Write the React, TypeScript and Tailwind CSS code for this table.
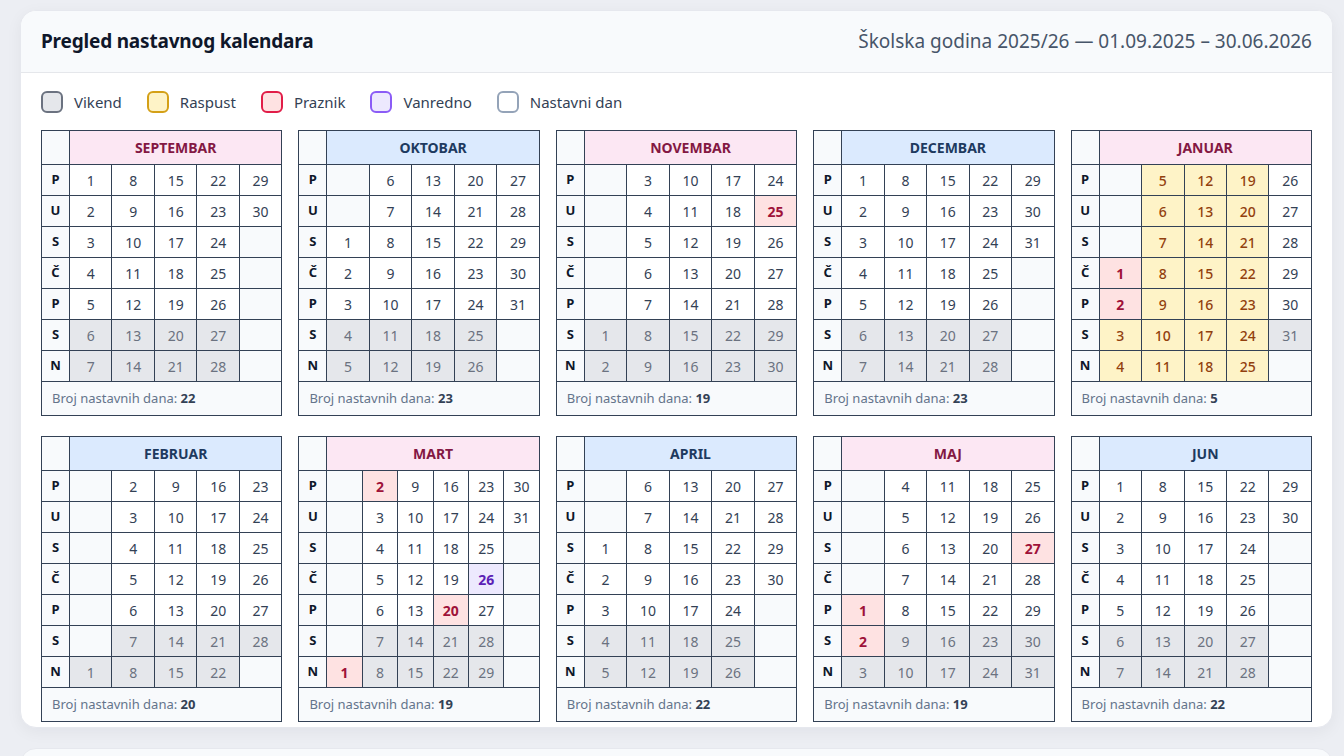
import React from "react";

type DayKind = "nastavni" | "vikend" | "raspust" | "praznik" | "vanredno";

const MONTHS = [
  { name: "Septembar", year: 2025, month: 8, count: 22 },
  { name: "Oktobar", year: 2025, month: 9, count: 23 },
  { name: "Novembar", year: 2025, month: 10, count: 19 },
  { name: "Decembar", year: 2025, month: 11, count: 23 },
  { name: "Januar", year: 2026, month: 0, count: 5 },
  { name: "Februar", year: 2026, month: 1, count: 20 },
  { name: "Mart", year: 2026, month: 2, count: 19 },
  { name: "April", year: 2026, month: 3, count: 22 },
  { name: "Maj", year: 2026, month: 4, count: 19 },
  { name: "Jun", year: 2026, month: 5, count: 22 },
];

const DAY_LABELS = ["P", "U", "S", "Č", "P", "S", "N"];

// month index (0-based) -> day list
const PRAZNICI: Record<number, number[]> = { 10: [25], 0: [1, 2], 2: [1, 2, 20], 4: [1, 2, 27] };
const RASPUST: Record<number, number[]> = {
  0: Array.from({ length: 23 }, (_, i) => i + 3),
};
const VANREDNO: Record<number, number[]> = { 2: [26] };

const CELL_STYLES: Record<DayKind, string> = {
  nastavni: "bg-white text-[#334155]",
  vikend: "bg-[#e5e7eb] text-[#6b7280]",
  raspust: "bg-[#fef3c7] text-[#92400e] font-medium",
  praznik: "bg-[#fee2e2] text-[#9f1239] font-bold",
  vanredno: "bg-[#ede9fe] text-[#5b21b6] font-bold",
};

const LEGEND = [
  { label: "Vikend", swatch: "bg-[#e5e7eb] border-[#6b7280]" },
  { label: "Raspust", swatch: "bg-[#fef3c7] border-[#d4a017]" },
  { label: "Praznik", swatch: "bg-[#fee2e2] border-[#e11d48]" },
  { label: "Vanredno", swatch: "bg-[#ede9fe] border-[#8b5cf6]" },
  { label: "Nastavni dan", swatch: "bg-white border-[#94a3b8]" },
];

function dayKind(month: number, day: number, weekday: number): DayKind {
  if (PRAZNICI[month]?.includes(day)) return "praznik";
  if (VANREDNO[month]?.includes(day)) return "vanredno";
  if (RASPUST[month]?.includes(day)) return "raspust";
  if (weekday >= 5) return "vikend";
  return "nastavni";
}

function buildWeeks(year: number, month: number) {
  const offset = (new Date(year, month, 1).getDay() + 6) % 7;
  const days = new Date(year, month + 1, 0).getDate();
  const cols = Math.ceil((offset + days) / 7);
  // grid[row][col] = day number or null
  const grid: (number | null)[][] = Array.from({ length: 7 }, () => Array(cols).fill(null));
  for (let d = 1; d <= days; d++) {
    const idx = offset + d - 1;
    grid[idx % 7][Math.floor(idx / 7)] = d;
  }
  return { grid, cols };
}

function MonthTable({ m, index }: { m: (typeof MONTHS)[number]; index: number }) {
  const { grid, cols } = buildWeeks(m.year, m.month);
  const pink = index % 2 === 0;

  return (
    <table className="w-full table-fixed border-collapse text-[14px]">
      <colgroup>
        <col className="w-[28px]" />
        {Array.from({ length: cols }, (_, i) => (
          <col key={i} />
        ))}
      </colgroup>
      <thead>
        <tr className="h-[34px]">
          <th className="border border-[#334155] bg-[#f8fafc]" />
          <th
            colSpan={cols}
            className={
              pink
                ? "border border-[#334155] bg-[#fce7f3] text-[14px] font-bold uppercase text-[#831843]"
                : "border border-[#334155] bg-[#dbeafe] text-[14px] font-bold uppercase text-[#1e3a5f]"
            }
          >
            {m.name}
          </th>
        </tr>
      </thead>
      <tbody>
        {grid.map((row, r) => (
          <tr key={r} className="h-[31px]">
            <td className="border border-[#334155] bg-[#f8fafc] text-center text-[13px] font-bold text-[#0f172a]">
              {DAY_LABELS[r]}
            </td>
            {row.map((d, c) =>
              d === null ? (
                <td key={c} className="border border-[#334155] bg-[#f8fafc]" />
              ) : (
                <td
                  key={c}
                  className={`border border-[#334155] text-center ${CELL_STYLES[dayKind(m.month, d, r)]}`}
                >
                  {d}
                </td>
              )
            )}
          </tr>
        ))}
        <tr className="h-[34px]">
          <td
            colSpan={cols + 1}
            className="border border-[#334155] bg-[#f8fafc] pl-[10px] text-[13px] text-[#64748b]"
          >
            Broj nastavnih dana: <span className="font-bold text-[#334155]">{m.count}</span>
          </td>
        </tr>
      </tbody>
    </table>
  );
}

export default function App() {
  return (
    <div className="min-h-screen bg-[#eceef3] pl-5 pr-[11px] pt-[10px] font-['Noto_Sans',sans-serif]">
      <section className="overflow-hidden rounded-2xl border border-[#e6e8ee] bg-white shadow-[0_4px_16px_rgba(15,23,42,0.05)]">
        <header className="flex h-[62px] items-center justify-between border-b border-[#e5e7eb] bg-[#f8fafc] px-5">
          <h2 className="text-[19px] font-bold tracking-[-0.01em] text-[#0f172a]">Pregled nastavnog kalendara</h2>
          <div className="text-[19px] text-[#475569]">Školska godina 2025/26 — 01.09.2025 – 30.06.2026</div>
        </header>

        <div className="px-5 pb-[5px] pt-[18px]">
          <div className="mb-[17px] flex h-[22px] items-center gap-[25px]">
            {LEGEND.map((l) => (
              <div key={l.label} className="flex items-center gap-[11px]">
                <span className={`h-[22px] w-[22px] rounded-md border-2 ${l.swatch}`} />
                <span className="text-[15px] text-[#334155]">{l.label}</span>
              </div>
            ))}
          </div>

          <div className="grid grid-cols-5 gap-x-4 gap-y-5">
            {MONTHS.map((m, i) => (
              <MonthTable key={m.name} m={m} index={i} />
            ))}
          </div>
        </div>
      </section>

      <section className="mt-5 h-[120px] rounded-2xl border border-[#e6e8ee] bg-[#f8fafc]" />
    </div>
  );
}
